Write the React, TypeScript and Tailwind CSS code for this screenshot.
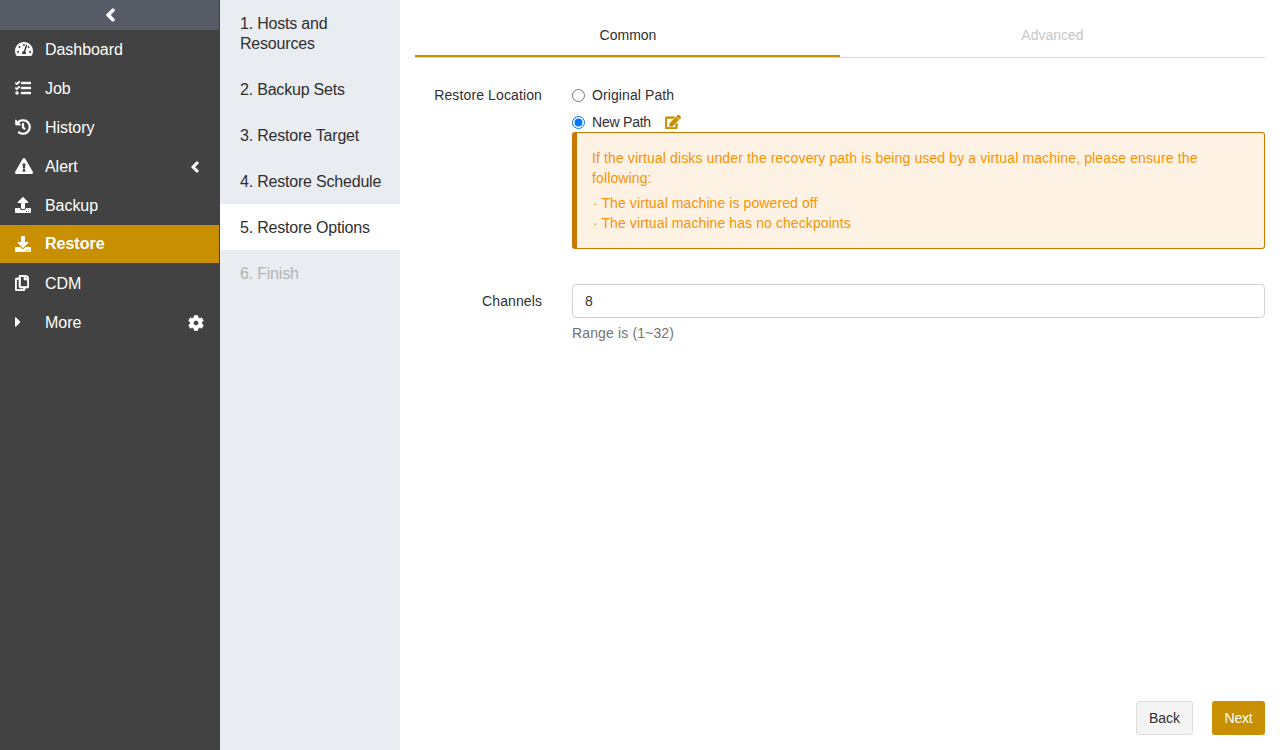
import type { ReactNode } from 'react';
import {
  FaCaretRight,
  FaChevronLeft,
  FaCog,
  FaDownload,
  FaEdit,
  FaExclamationTriangle,
  FaHistory,
  FaRegCopy,
  FaTachometerAlt,
  FaTasks,
  FaUpload,
} from 'react-icons/fa';

type MenuItem = { label: string; icon: ReactNode; trailing?: ReactNode; active?: boolean };

const menu: MenuItem[] = [
  { label: 'Dashboard', icon: <FaTachometerAlt className="h-4 w-[18px]" /> },
  { label: 'Job', icon: <FaTasks className="h-4 w-4 stroke-[14]" /> },
  { label: 'History', icon: <FaHistory className="h-4 w-4 stroke-[8]" /> },
  {
    label: 'Alert',
    icon: <FaExclamationTriangle className="h-4 w-[18px]" />,
    trailing: <FaChevronLeft className="mr-[20px] h-3 w-[8px] stroke-[50]" />,
  },
  { label: 'Backup', icon: <FaUpload className="h-4 w-4" /> },
  { label: 'Restore', icon: <FaDownload className="h-4 w-4" />, active: true },
  { label: 'CDM', icon: <FaRegCopy className="h-4 w-[14px] stroke-[22]" /> },
  {
    label: 'More',
    icon: <FaCaretRight className="h-4 w-[6px]" />,
    trailing: <FaCog className="mr-[15px] h-4 w-4 stroke-[10]" />,
  },
];

const steps = [
  '1. Hosts and Resources',
  '2. Backup Sets',
  '3. Restore Target',
  '4. Restore Schedule',
  '5. Restore Options',
  '6. Finish',
];

function Sidebar() {
  return (
    <aside className="w-[220px] shrink-0 bg-[#424242] text-base text-white">
      <button className="flex h-[30px] w-[219px] items-center justify-center bg-[#575b66] pl-[2px]">
        <FaChevronLeft className="h-[14px] w-[9px] stroke-[50]" />
      </button>
      <nav>
        {menu.map((item) => (
          <a
            key={item.label}
            className={
              item.active
                ? 'mb-px flex h-[38px] w-[219px] items-center bg-[#c88f00] pl-[15px] font-bold'
                : 'flex h-[39px] w-[219px] items-center pl-[15px] tracking-[-0.05px]'
            }
          >
            <span className={item.active ? 'flex w-[30px]' : 'flex w-[30px] pb-px'}>{item.icon}</span>
            <span className="flex-1 leading-5">{item.label}</span>
            {item.trailing}
          </a>
        ))}
      </nav>
    </aside>
  );
}

function Steps() {
  return (
    <ol className="w-[180px] shrink-0 bg-[#e9ecf1] text-base leading-5 tracking-[-0.2px]">
      {steps.map((step, i) => (
        <li
          key={step}
          className={
            i === 4
              ? 'bg-white pt-[14px] pr-[15px] pb-3 pl-5'
              : i === 5
                ? 'pt-[14px] pr-[15px] pb-3 pl-5 text-[#b5b5b5]'
                : 'pt-[14px] pr-[15px] pb-3 pl-5'
          }
        >
          {step}
        </li>
      ))}
    </ol>
  );
}

export default function App() {
  return (
    <div className="flex h-[750px] w-[1280px] overflow-hidden bg-white font-['Liberation_Sans',Arial,sans-serif] text-[14px] leading-5 text-[#2f2f2f]">
      <Sidebar />
      <Steps />
      <main className="flex flex-1 flex-col px-[15px] pt-[15px] pb-[15px]">
        <div className="flex h-[43px] border-b border-[#d5d5e2] text-center">
          <div className="h-[42px] w-1/2 border-b-2 border-[#c88f00] pt-[10px] pl-px">Common</div>
          <div className="w-1/2 pt-[10px] text-[#c8c8c8]">Advanced</div>
        </div>

        <div className="mt-[27px] flex">
          <div className="w-[127px] text-right tracking-[0.12px]">Restore Location</div>
          <div className="ml-[30px] flex-1">
            <label className="flex h-5 items-center tracking-[0.1px]">
              <input type="radio" name="location" className="mr-[7px] h-[13px] w-[13px]" />
              Original Path
            </label>
            <div className="mt-[7px] flex h-5 items-center">
              <label className="flex items-center tracking-[-0.22px]">
                <input type="radio" name="location" defaultChecked className="mr-[7px] h-[13px] w-[13px]" />
                New Path
              </label>
              <FaEdit className="ml-[14px] h-[14px] w-4 stroke-[20] text-[#c88f00]" />
            </div>
            <div className="h-[117px] rounded-[3px] border border-l-[5px] border-[#c97800] bg-[#fdf2e4] pt-[15px] pr-[15px] pl-[15px] text-[#f89406]">
              <p className="tracking-[0.12px]">
                If the virtual disks under the recovery path is being used by a virtual machine, please ensure the
                <br />
                following:
              </p>
              <ul className="mt-[5px] pl-px tracking-[0.09px]">
                <li>· The virtual machine is powered off</li>
                <li>· The virtual machine has no checkpoints</li>
              </ul>
            </div>
          </div>
        </div>

        <div className="mt-[35px] flex">
          <div className="w-[127px] pt-[7px] text-right tracking-[0.1px]">Channels</div>
          <div className="ml-[30px] flex-1">
            <input
              defaultValue="8"
              className="block h-[34px] w-full rounded-[4px] border border-[#d0d2df] px-3 text-[14px] outline-none"
            />
            <p className="mt-[5px] tracking-[0.14px] text-[#737373]">Range is (1~32)</p>
          </div>
        </div>

        <div className="mt-auto flex justify-end gap-[19px]">
          <button className="h-[34px] w-[57px] rounded-[3px] border border-[#dddddd] bg-[#f4f4f4]">Back</button>
          <button className="h-[34px] w-[53px] rounded-[3px] bg-[#c88f00] tracking-[-0.2px] text-white">Next</button>
        </div>
      </main>
    </div>
  );
}
